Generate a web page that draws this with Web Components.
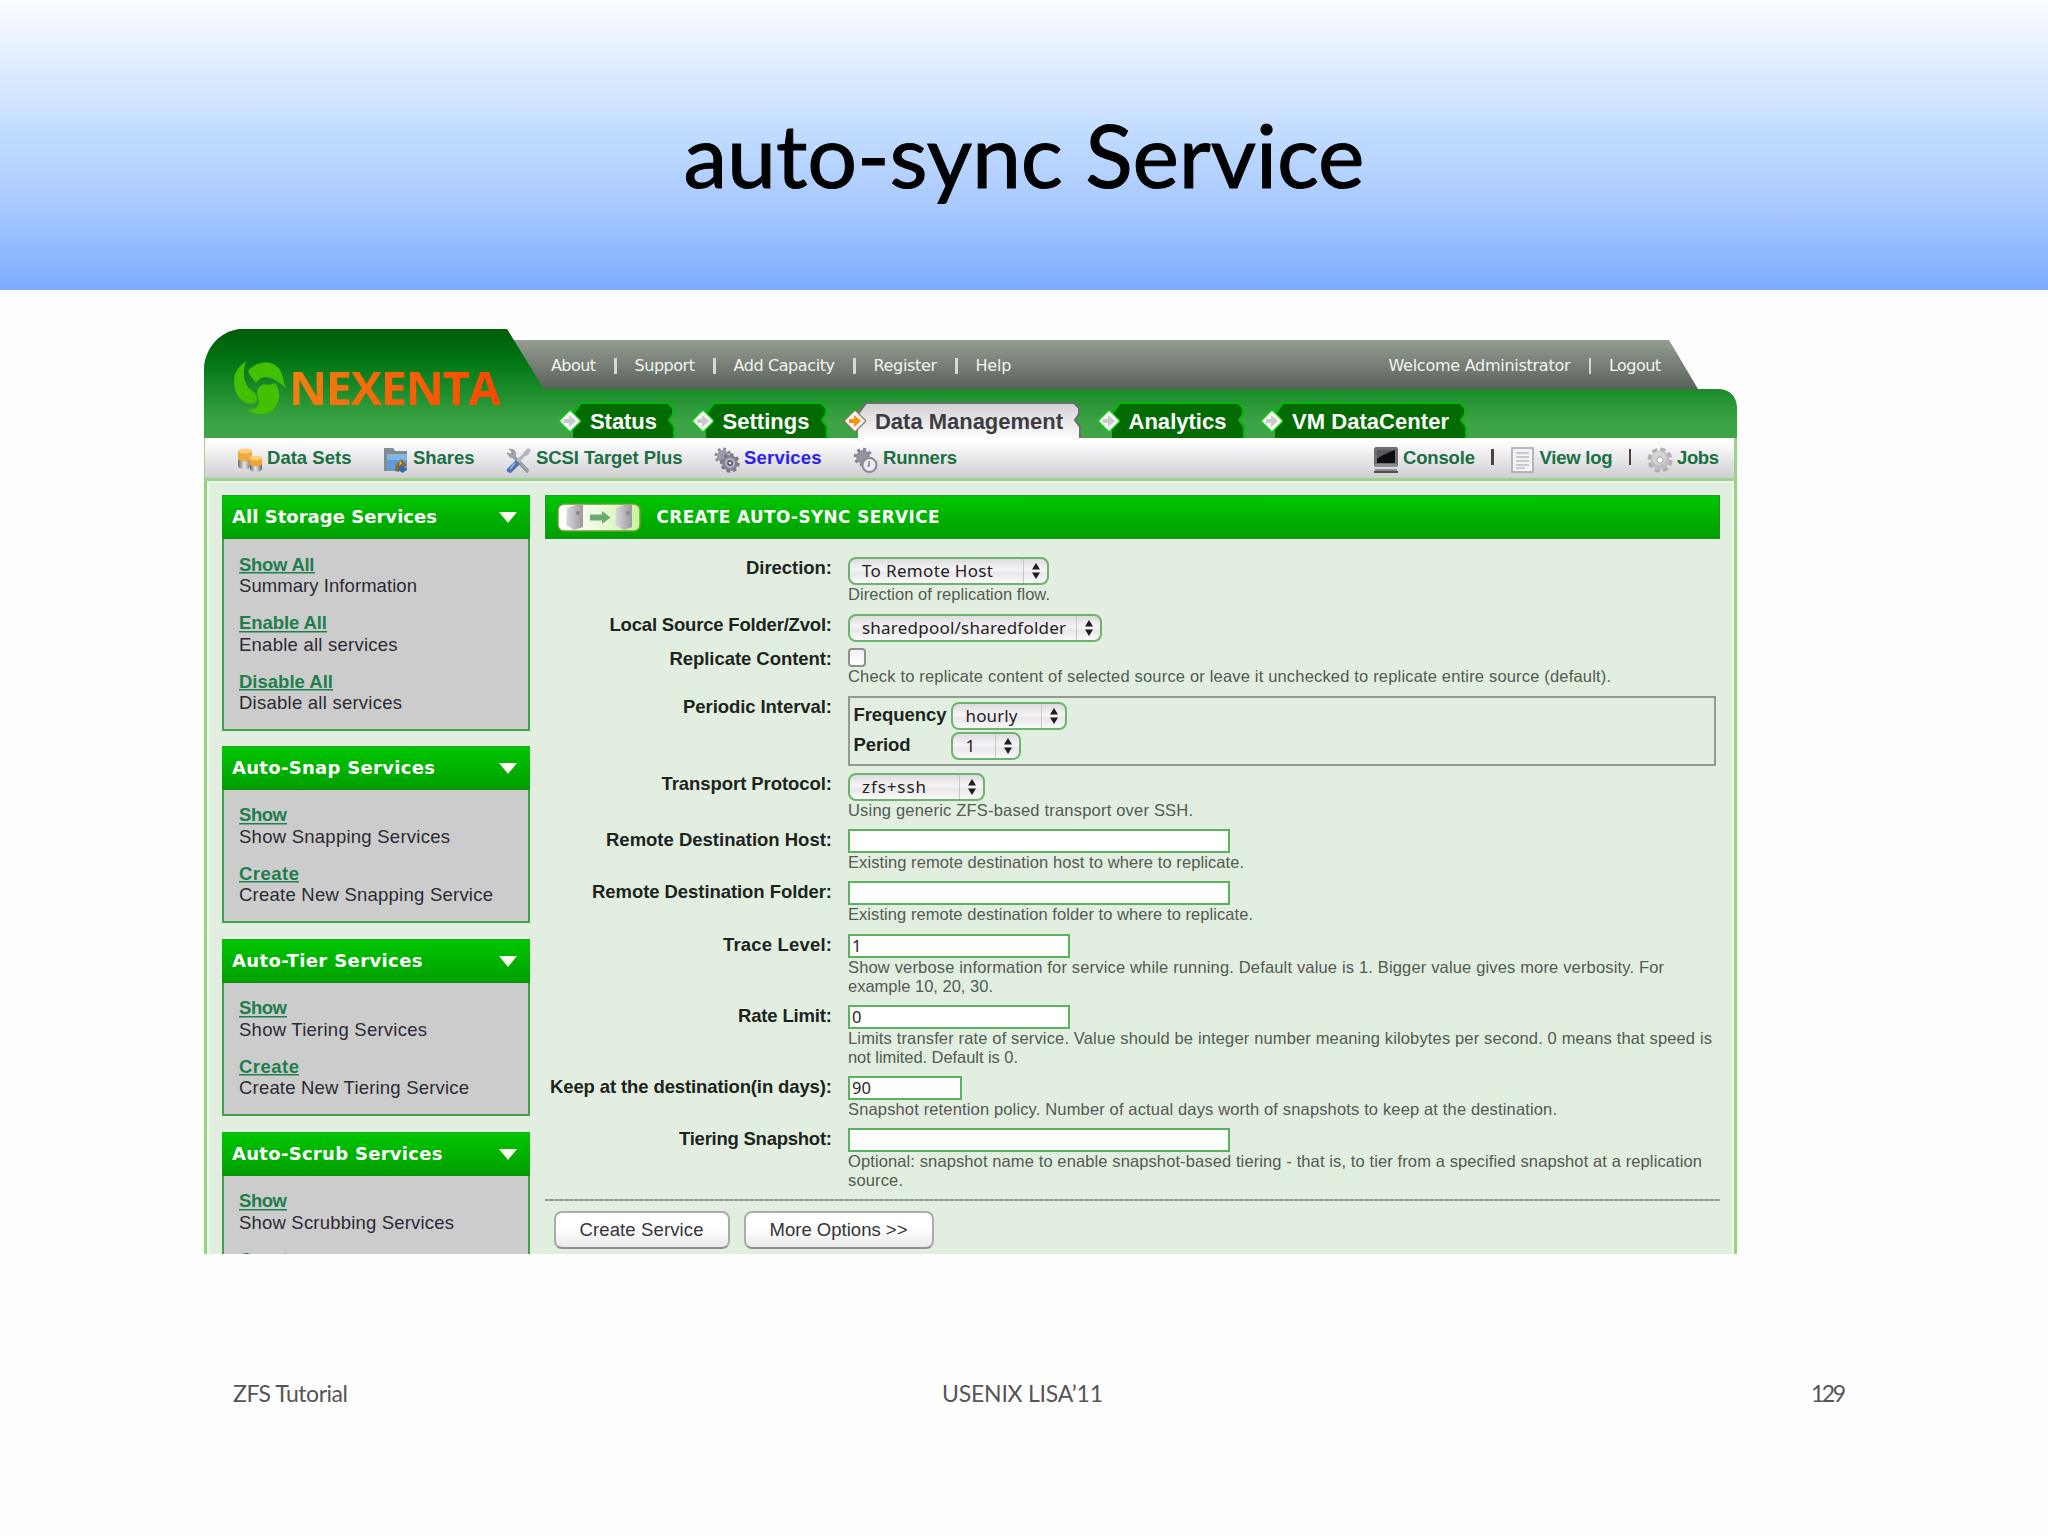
<!DOCTYPE html>
<html lang="en">
<head>
<meta charset="utf-8">
<title>auto-sync Service</title>
<style>
html, body{
   margin:0;
   width:2048px;
   height:1536px;
   background:#fefefe;
   overflow:hidden;
}
</style>
</head>
<body>
<slide-page>
   <fit-text slot="title" w="681">auto-sync Service</fit-text>

   <nex-console>
      <nex-sidebar slot="side">
         <side-box name="All Storage Services" w="205" h="235.5">
            <side-link name="Show All" w="75.5" tw="178">Summary Information</side-link>
            <side-link name="Enable All" w="88" tw="158.5">Enable all services</side-link>
            <side-link name="Disable All" w="94" tw="163">Disable all services</side-link>
         </side-box>
         <side-box name="Auto-Snap Services" w="203" h="177.7">
            <side-link name="Show" w="48" tw="211">Show Snapping Services</side-link>
            <side-link name="Create" w="60" tw="254">Create New Snapping Service</side-link>
         </side-box>
         <side-box name="Auto-Tier Services" w="190.5" h="177.7">
            <side-link name="Show" w="48" tw="188">Show Tiering Services</side-link>
            <side-link name="Create" w="60" tw="230">Create New Tiering Service</side-link>
         </side-box>
         <side-box name="Auto-Scrub Services" w="210.5" h="177.7">
            <side-link name="Show" w="48" tw="215">Show Scrubbing Services</side-link>
            <side-link name="Create" w="60"></side-link>
         </side-box>
      </nex-sidebar>

      <sync-form slot="main"></sync-form>
   </nex-console>

   <fit-text slot="left" w="115">ZFS Tutorial</fit-text>
   <fit-text slot="center" w="161">USENIX LISA’11</fit-text>
   <fit-text slot="right" w="35">129</fit-text>
</slide-page>

<script>
const ICONS = {
   data: `
      <defs><linearGradient id="c" x2="1"><stop offset="0" stop-color="#6d6a68"/><stop offset=".45" stop-color="#e9e7e5"/><stop offset="1" stop-color="#6e6a66"/></linearGradient></defs>
      <path d="M1 4v15c0 4 14 4 14 0V4z" fill="url(#c)"/>
      <path d="M1 4v8c0 3 14 3 14 0V4z" fill="#f0a840"/><ellipse cx="8" cy="4" rx="7" ry="2.6" fill="#fbcd78"/>
      <path d="M13 11v11c0 3.5 12 3.5 12 0V11z" fill="url(#c)"/>
      <path d="M13 11v6c0 3 12 3 12 0v-6z" fill="#eda436"/><ellipse cx="19" cy="11" rx="6" ry="2.3" fill="#fbd07e"/>`,
   share: `
      <path d="M1 1h9l2 3h12v20H1z" fill="#828a94"/><path d="M4 7h20v17H4z" fill="#609bd6"/><path d="M4 7h20v6H4z" fill="#84b4e2"/>
      <path d="M12 24c0-6 2-9 5-9l1-3 6 6-5 3c-2 0-3 1-3 4z" fill="#8b6a2c"/><path d="M17 14l2 2-3 3z" fill="#f3b63a"/><path d="M17 18l7 4-4 4-5-3z" fill="#2d69b0"/>`,
   tools: `
      <path d="M3 2l5 1 2 4-1 2 14 14-2 3L7 11l-3-1-3-4 4 1 1-2z" fill="#9ba0a7" stroke="#9ba0a7"/>
      <path d="M22 1l3 2-3 5-3 1-6 7-3-3 7-6 1-2z" fill="#b3b6bc"/><path d="M10 13l4 4-9 9c-3 0-5-2-4-4z" fill="#4c74b4"/><path d="M9 16l-5 6" stroke="#9db8e2" stroke-width="1.5"/>`,
   gears: `
      <circle cx="9" cy="9" r="6" fill="#9d9ba9"/><circle cx="9" cy="9" r="7" fill="none" stroke="#8b8997" stroke-width="3" stroke-dasharray="2.8 2.7"/>
      <circle cx="16" cy="16" r="8" fill="#888696"/><circle cx="16" cy="16" r="8.3" fill="none" stroke="#77758a" stroke-width="3" stroke-dasharray="3.3 3.2"/>
      <circle cx="16" cy="16" r="5" fill="#b6b4c0"/><circle cx="16" cy="16" r="3" fill="#5f5e6c"/><circle cx="16" cy="16" r="1.3" fill="#e2e2e8"/>`,
   runner: `
      <circle cx="10" cy="10" r="7" fill="#94929f"/><circle cx="10" cy="10" r="7.8" fill="none" stroke="#85839a" stroke-width="3" stroke-dasharray="3 3.1"/>
      <circle cx="16.5" cy="18" r="7" fill="#ececf1" stroke="#8b8a95" stroke-width="2"/><path d="M16 14v5M16.5 19h-2" stroke="#777" stroke-width="1.4" fill="none"/>`,
   console: `
      <rect x="1" y="0" width="24" height="20" rx="2" fill="#6d6f74"/><rect x="4" y="3" width="18" height="13" fill="#0c0c0e"/><path d="M4 3h18L10 8L4 12z" fill="#55575b"/>
      <path d="M2 17h22v8H2z" fill="#8c8e92"/><path d="M2 20h22v2H2z" fill="#d9dadc"/><path d="M1 24h24v2H1z" fill="#4d4f53"/>`,
   log: `
      <rect x="2" y="1" width="21" height="24" fill="#f3f3f4" stroke="#a9a9ad" stroke-width="1.6"/><path d="M6 6h13M6 10h13M6 14h13M6 18h13M6 21h9" stroke="#bcbcc0" stroke-width="1.3"/>`,
   jobs: `
      <circle cx="13" cy="13" r="10" fill="none" stroke="#b0b0b3" stroke-width="5" stroke-dasharray="5 2.85"/><circle cx="13" cy="13" r="9.5" fill="#bfbfc1"/>
      <circle cx="12" cy="11" r="7" fill="#d4d4d6"/><circle cx="13" cy="13" r="3.2" fill="#f5f5f6" stroke="#a6a6a9"/>`
}

window.customElements.define('slide-page',
   class SlidePage extends HTMLElement {
      constructor(){super(); this.attachShadow({mode:'open'});
	 this.shadowRoot.innerHTML = `
<style>
:host{
   display:flex;
   flex-direction:column;
   width:2048px;
   height:1536px;
   font-family:Lato, sans-serif;
}
header{
   height:290px;
   box-sizing:border-box;
   padding-top:103px;
   text-align:center;
   font-size:88px;
   line-height:102px;
   color:#000;
   -webkit-text-stroke:1px #000;
   background:linear-gradient(#fbfdff 0, #d9e8ff 28%, #c0dbff 47%, #aacaff 70%, #7cacff 100%);
}
main{ margin:39px 0 0 204px; }
footer{
   display:grid;
   grid-template-columns:709px auto 1fr;
   margin:125px 202px 0 233px;
   font-size:23px;
   line-height:28px;
   color:#555458;
}
.r{ text-align:right; }
</style>
<header><slot name="title"></slot></header>
<main><slot></slot></main>
<footer>
   <div><slot name="left"></slot></div>
   <div><slot name="center"></slot></div>
   <div class="r"><slot name="right"></slot></div>
</footer>
   `;
      }
})

window.customElements.define('page-icon',
   class PageIcon extends HTMLElement {
      constructor(){super(); this.attachShadow({mode:'open'});
	 this.shadowRoot.innerHTML = `
<style>
:host{ display:block; width:26px; height:26px; flex:none; }
svg{ display:block; }
</style>
<svg width="26" height="26" viewBox="0 0 26 26">${ICONS[this.getAttribute("name")]}</svg>
   `;
      }
})

window.customElements.define('nav-tab',
   class NavTab extends HTMLElement {
      constructor(){super(); this.attachShadow({mode:'open'});
	 const w = +this.getAttribute("w");
	 const on = this.hasAttribute("active");
	 const r = w + 48;
	 const fill = on ? "url(#g)" : "#026b02";
	 const line = on ? "#66706a" : "#05b70a";

	 this.shadowRoot.innerHTML = `
<style>
:host{
   display:grid;
   width:${r}px;
   height:36px;
   color:${on ? "#3c3c42" : "#fff"};
   font:bold 22px/26px "Liberation Sans", sans-serif;
}
svg, div{ grid-area:1/1; }
svg{ overflow:visible; }
div{ padding:7px 0 0 30px; }
</style>
<svg width="${r}" height="36">
   <defs><linearGradient id="g" x2="0" y2="1"><stop offset="0" stop-color="#d3cfd1"/><stop offset="1" stop-color="#fdfdfe"/></linearGradient></defs>
   <path d="M13 36V10L21 1H${r-7}L${r-2} 6V12L${r-6} 18L${r-1} 25V36z" fill="${fill}"/>
   <path d="M13 12L21 1H${r-7}L${r-2} 6V12L${r-6} 18L${r-1} 25V36" fill="none" stroke="${line}" stroke-width="2"/>
   <path d="M10 10L19 19L10 28L1 19z" fill="#f4f4f3" stroke="${on ? "#8b7c66" : "#16d01c"}" stroke-width="4" stroke-linejoin="round"/>
   <path d="M10 10L19 19L10 28L1 19z" fill="#f6f6f5" stroke="#f6f6f5" stroke-width="1.5" stroke-linejoin="round"/>
   <path d="M4 17h5v-4l7 6-7 6v-4H4z" fill="${on ? "#fb8f12" : "#c9c9c9"}"/>
</svg>
<div><fit-text w="${w}"><slot></slot></fit-text></div>
   `;
      }
})

window.customElements.define('menu-item',
   class MenuItem extends HTMLElement {
      constructor(){super(); this.attachShadow({mode:'open'});
	 this.shadowRoot.innerHTML = `
<style>
:host{
   display:flex;
   gap:4px;
   color:${this.hasAttribute("active") ? "#2b20f4" : "#1b6f42"};
   font:bold 18.5px/22px "Liberation Sans", sans-serif;
}
page-icon{ margin-top:1px; }
fit-text{ margin-top:1px; }
</style>
<page-icon name="${this.getAttribute("icon")}"></page-icon>
<fit-text w="${this.getAttribute("w")}"><slot></slot></fit-text>
   `;
      }
})

window.customElements.define('nex-console',
   class NexConsole extends HTMLElement {
      constructor(){super(); this.attachShadow({mode:'open'});
	 this.shadowRoot.innerHTML = `
<style>
:host{
   display:flex;
   flex-direction:column;
   width:1533px;
   height:924.5px;
   overflow:hidden;
}
.head{
   display:grid;
   grid-template-columns:339px 1fr;
   height:109px;
   flex:none;
}
.bg{ grid-area:1/1/2/3; display:block; }
.logo{
   grid-area:1/1;
   display:flex;
   padding:31px 0 0 28px;
   gap:1px;
}
.brand{
   font:bold 47px/56px "Open Sans", sans-serif;
   background:linear-gradient(90deg, #f08012, #fb4703);
   -webkit-background-clip:text;
   background-clip:text;
   color:transparent;
   height:56px;
   margin-top:-1px;
}
.right{ grid-area:1/2; }
.top{
   display:flex;
   justify-content:space-between;
   height:60px;
   box-sizing:border-box;
   padding:26px 76px 0 8px;
   font:16px/22px "DejaVu Sans", sans-serif;
   color:#f2f4f0;
}
.top div, .tools, .menu{ display:flex; }
.top div{ gap:18px; }
i{
   width:2.5px;
   height:16px;
   margin-top:3px;
   background:#d5d9d3;
}
.tabs{
   display:flex;
   gap:17.5px;
   padding:13px 0 0 17px;
}
.sub{
   display:flex;
   justify-content:space-between;
   height:43px;
   flex:none;
   box-sizing:border-box;
   padding:8px 15px 0 32px;
   border:solid #9ad389;
   border-width:0 3px 3px 1px;
   background:linear-gradient(#fff 8%, #e9e9ec 50%, #cfcfd2 100%);
}
.menu{ gap:31.5px; }
.tools{ gap:16px; }
.tools i{ background:#4b4046; }
.body{
   display:flex;
   gap:14.5px;
   flex:1;
   min-height:0;
   padding:14px 12px 0 15px;
   border:solid #96d184;
   border-width:0 3px;
   background:#e2eee0;
   box-shadow:inset 2px 0 #eefae9, inset -2px 0 #eefae9, inset 0 2px #edf5eb;
}
</style>
<div class="head">
   <svg class="bg" width="1533" height="109">
      <defs>
         <linearGradient id="dk" gradientUnits="userSpaceOnUse" x1="0" y1="0" x2="0" y2="109"><stop offset="0" stop-color="#015c08"/><stop offset=".3" stop-color="#027614"/><stop offset=".6" stop-color="#1f8f2e"/><stop offset=".85" stop-color="#3ca444"/><stop offset="1" stop-color="#3ea445"/></linearGradient>
         <linearGradient id="gr" x2="0" y2="1"><stop offset="0" stop-color="#959d92"/><stop offset="1" stop-color="#5a615a"/></linearGradient>
      </defs>
      <path d="M290 11H1465L1494 60H290z" fill="url(#gr)"/>
      <path d="M0 109V38C2 18 16 2 36 0H303L340 60H1514C1525 60 1533 67 1533 79V109z" fill="url(#dk)"/>
   </svg>
   <div class="logo">
      <svg width="56" height="54" viewBox="41 51 56 54" fill="#43c002">
         <path d="M55 53C45 58 41 68 44 80C47 91 56 97 64 94C67 91 66 87 63 83C54 79 50 66 55 53z"/>
         <path d="M57 62C66 51 83 51 89 61C92 66 92 72 95 79C88 73 80 67 73 68C68 69 67 72 65 74C62 70 58 66 57 62z"/>
         <path d="M73 75C77 77 82 75 84 74C91 83 89 97 79 103C71 107 62 105 57 101C67 101 69 95 67 88C65 82 67 77 73 75z"/>
      </svg>
      <fit-text class="brand" w="212">NEXENTA</fit-text>
   </div>
   <div class="right">
      <div class="top">
         <div>
            <fit-text w="45">About</fit-text><i></i>
            <fit-text w="60.5">Support</fit-text><i></i>
            <fit-text w="101.5">Add Capacity</fit-text><i></i>
            <fit-text w="63.5">Register</fit-text><i></i>
            <fit-text w="36">Help</fit-text>
         </div>
         <div>
            <fit-text w="182">Welcome Administrator</fit-text><i></i>
            <fit-text w="52">Logout</fit-text>
         </div>
      </div>
      <div class="tabs">
         <nav-tab w="67">Status</nav-tab>
         <nav-tab w="87">Settings</nav-tab>
         <nav-tab w="188" active>Data Management</nav-tab>
         <nav-tab w="98">Analytics</nav-tab>
         <nav-tab w="157">VM DataCenter</nav-tab>
      </div>
   </div>
</div>
<div class="sub">
   <div class="menu">
      <menu-item icon="data" w="84.5">Data Sets</menu-item>
      <menu-item icon="share" w="61.5">Shares</menu-item>
      <menu-item icon="tools" w="146.5">SCSI Target Plus</menu-item>
      <menu-item icon="gears" w="77.5" active>Services</menu-item>
      <menu-item icon="runner" w="74">Runners</menu-item>
   </div>
   <div class="tools">
      <menu-item icon="console" w="72">Console</menu-item><i></i>
      <menu-item icon="log" w="73">View log</menu-item><i></i>
      <menu-item icon="jobs" w="42">Jobs</menu-item>
   </div>
</div>
<div class="body">
   <slot name="side"></slot>
   <slot name="main"></slot>
</div>
   `;
      }
})

window.customElements.define('nex-sidebar',
   class NexSidebar extends HTMLElement {
      constructor(){super(); this.attachShadow({mode:'open'});
	 this.shadowRoot.innerHTML = `
<style>
:host{
   display:flex;
   flex-direction:column;
   gap:15.3px;
   width:308px;
   flex:none;
}
</style>
<slot></slot>
   `;
      }
})

window.customElements.define('side-box',
   class SideBox extends HTMLElement {
      constructor(){super(); this.attachShadow({mode:'open'});
	 this.shadowRoot.innerHTML = `
<style>
:host{
   display:block;
   flex:none;
   box-sizing:border-box;
   height:${this.getAttribute("h")}px;
   border:2px solid #43a047;
   border-top:none;
   background:#cdcccd;
}
.title{
   display:flex;
   justify-content:space-between;
   height:44px;
   box-sizing:border-box;
   margin:0 -2px;
   padding:10px 13px 0 10px;
   border-top:1px solid #22a032;
   border-bottom:1px solid #108a1c;
   background:linear-gradient(#00c600, #009f00);
   color:#fff;
   font:bold 18px/22px "DejaVu Sans", sans-serif;
}
svg{ margin-top:6px; }
.links{
   display:flex;
   flex-direction:column;
   gap:15.5px;
   padding:14.5px 15px 0;
}
</style>
<div class="title">
   <fit-text w="${this.getAttribute("w")}">${this.getAttribute("name")}</fit-text>
   <svg width="18" height="12"><path d="M0 0H18L9 11z" fill="#fbfff0"/></svg>
</div>
<div class="links"><slot></slot></div>
   `;
      }
})

window.customElements.define('side-link',
   class SideLink extends HTMLElement {
      constructor(){super(); this.attachShadow({mode:'open'});
	 const get = name => this.getAttribute(name);
	 this.shadowRoot.innerHTML = `
<style>
:host{
   display:flex;
   flex-direction:column;
   font:18.5px/21.5px "Liberation Sans", sans-serif;
   color:#2c2a33;
}
.name{
   font-weight:bold;
   color:#1f7e4b;
   background:linear-gradient(#1f7e4b, #1f7e4b) 0 18.5px/100% 1.5px no-repeat;
}
</style>
<fit-text class="name" w="${get("w")}">${get("name")}</fit-text>
${get("tw") ? `<fit-text w="${get("tw")}"><slot></slot></fit-text>` : ""}
   `;
      }
})

window.customElements.define('mac-select',
   class MacSelect extends HTMLElement {
      constructor(){super(); this.attachShadow({mode:'open'});
	 this.shadowRoot.innerHTML = `
<style>
:host{
   display:flex;
   box-sizing:border-box;
   width:${this.getAttribute("w")}px;
   height:28px;
   border:2px solid #6db36f;
   border-radius:8px;
   background:linear-gradient(#dedcde, #f6f4f6 45%, #e9e7e9 60%, #fbfbfb);
   font:17px/24px "Noto Sans", sans-serif;
   color:#222;
}
.value{ flex:1; padding-left:${this.getAttribute("pad") || 12}px; }
.arrows{
   width:23px;
   border-left:1px solid #c9c7c9;
}
svg{ display:block; margin:4px 0 0 8px; }
</style>
<div class="value"><fit-text w="${this.getAttribute("tw")}"><slot></slot></fit-text></div>
<div class="arrows"><svg width="8" height="16"><path d="M4 0L8 6.5H0zM4 16L0 9.5H8z" fill="#1c1c1c"/></svg></div>
   `;
      }
})

window.customElements.define('text-box',
   class TextBox extends HTMLElement {
      constructor(){super(); this.attachShadow({mode:'open'});
	 this.shadowRoot.innerHTML = `
<style>
:host{
   display:block;
   box-sizing:border-box;
   width:${this.getAttribute("w")}px;
   height:24px;
   padding-left:2px;
   border:2px solid #5cb160;
   background:#fefffe;
   font:16.5px/20px "Noto Sans", sans-serif;
   color:#2b2226;
}
</style>
<slot></slot>
   `;
      }
})

window.customElements.define('form-row',
   class FormRow extends HTMLElement {
      constructor(){super(); this.attachShadow({mode:'open'});
	 const get = name => this.getAttribute(name);
	 this.shadowRoot.innerHTML = `
<style>
:host{
   display:grid;
   grid-template-columns:287.5px 1fr;
   column-gap:16px;
   align-content:start;
   height:${get("h")}px;
   font-family:"Liberation Sans", sans-serif;
}
.label{
   text-align:right;
   font-weight:bold;
   font-size:18.5px;
   line-height:22px;
   color:#1d241d;
}
.help{
   display:flex;
   flex-direction:column;
   font-size:16.5px;
   line-height:18.5px;
   color:#525a52;
}
</style>
<div class="label"><fit-text w="${get("w")}">${get("label")}</fit-text></div>
<div>
   <slot></slot>
   <div class="help"><slot name="help"></slot></div>
</div>
   `;
      }
})

window.customElements.define('push-button',
   class PushButton extends HTMLElement {
      constructor(){super(); this.attachShadow({mode:'open'});
	 this.shadowRoot.innerHTML = `
<style>
:host{
   display:block;
   box-sizing:border-box;
   width:${this.getAttribute("w")}px;
   height:38px;
   padding-top:5px;
   border:2px solid #a9aca8;
   border-bottom-color:#8e918e;
   border-radius:8px;
   background:linear-gradient(#fff 45%, #e9e9ea);
   text-align:center;
   font:18.5px/24px "Liberation Sans", sans-serif;
   color:#333338;
}
</style>
<fit-text w="${this.getAttribute("tw")}"><slot></slot></fit-text>
   `;
      }
})

window.customElements.define('sync-form',
   class SyncForm extends HTMLElement {
      constructor(){super(); this.attachShadow({mode:'open'});
	 this.shadowRoot.innerHTML = `
<style>
:host{
   display:block;
   width:1175.5px;
   flex:none;
}
.bar{
   display:flex;
   gap:16px;
   height:44px;
   box-sizing:border-box;
   padding:7px 11px 0;
   border:1px solid #1c8f28;
   border-top-color:#22a032;
   background:linear-gradient(#00c600, #009f00);
   color:#fff;
   font:bold 16.8px/22px "DejaVu Sans", sans-serif;
}
.bar fit-text{ margin-top:3px; }
.rows{ padding-top:18px; }
.check{
   width:18px;
   height:19px;
   box-sizing:border-box;
   border:2px solid #8c918c;
   border-radius:4px;
   background:linear-gradient(#f1f1f1, #fff);
}
.period{
   display:grid;
   grid-template-columns:97px auto;
   grid-auto-rows:30px;
   justify-content:start;
   box-sizing:border-box;
   width:868px;
   height:70px;
   padding:4px 0 0 3.5px;
   border:2px solid #929a91;
   font:bold 18.5px/26px "Liberation Sans", sans-serif;
   color:#1d241d;
}
.line{
   height:2px;
   background:repeating-linear-gradient(90deg, #8c968c 0 3px, #aab4a9 3px 5px);
}
.buttons{
   display:flex;
   gap:14px;
   padding:10px 0 0 9px;
}
</style>
<div class="bar">
   <svg width="84" height="29">
      <defs>
         <linearGradient id="p" x2="1"><stop offset="0" stop-color="#fff"/><stop offset=".5" stop-color="#eef9df"/><stop offset="1" stop-color="#c5f59a"/></linearGradient>
         <linearGradient id="d" x2="1"><stop offset="0" stop-color="#dcdadc"/><stop offset="1" stop-color="#9c9a9e"/></linearGradient>
      </defs>
      <rect x="1" y="1" width="82" height="27" rx="6" fill="url(#p)" stroke="#6e9a3c" stroke-width="1.5"/>
      <path d="M10 5L18 2H26V24L17 27L9 22z" fill="url(#d)"/><circle cx="21" cy="10" r="2" fill="#89868c"/>
      <path d="M59 5L67 2H75V24L67 27L58 22z" fill="url(#d)"/><circle cx="71" cy="10" r="2" fill="#89868c"/>
      <path d="M33 11.5H45V8L53.500 14.500L45 21V17.500H33z" fill="#6bab70"/>
   </svg>
   <fit-text w="283">CREATE AUTO-SYNC SERVICE</fit-text>
</div>
<div class="rows">
   <form-row label="Direction:" w="86" h="57">
      <mac-select w="201" tw="131">To Remote Host</mac-select>
      <fit-text slot="help" w="202">Direction of replication flow.</fit-text>
   </form-row>
   <form-row label="Local Source Folder/Zvol:" w="222.5" h="34">
      <mac-select w="254" tw="204">sharedpool/sharedfolder</mac-select>
   </form-row>
   <form-row label="Replicate Content:" w="162.5" h="48">
      <div class="check"></div>
      <fit-text slot="help" w="763">Check to replicate content of selected source or leave it unchecked to replicate entire source (default).</fit-text>
   </form-row>
   <form-row label="Periodic Interval:" w="149" h="76.5">
      <div class="period">
         <fit-text w="93">Frequency</fit-text><mac-select w="116" tw="52" pad="13">hourly</mac-select>
         <fit-text w="57">Period</fit-text><mac-select w="70" tw="9" pad="13">1</mac-select>
      </div>
   </form-row>
   <form-row label="Transport Protocol:" w="170.5" h="56.5">
      <mac-select w="137" tw="64">zfs+ssh</mac-select>
      <fit-text slot="help" w="345">Using generic ZFS-based transport over SSH.</fit-text>
   </form-row>
   <form-row label="Remote Destination Host:" w="226" h="52">
      <text-box w="382"></text-box>
      <fit-text slot="help" w="396">Existing remote destination host to where to replicate.</fit-text>
   </form-row>
   <form-row label="Remote Destination Folder:" w="240" h="53">
      <text-box w="382"></text-box>
      <fit-text slot="help" w="405">Existing remote destination folder to where to replicate.</fit-text>
   </form-row>
   <form-row label="Trace Level:" w="109" h="71">
      <text-box w="222">1</text-box>
      <fit-text slot="help" w="816">Show verbose information for service while running. Default value is 1. Bigger value gives more verbosity. For</fit-text>
      <fit-text slot="help" w="145">example 10, 20, 30.</fit-text>
   </form-row>
   <form-row label="Rate Limit:" w="94" h="71">
      <text-box w="222">0</text-box>
      <fit-text slot="help" w="864">Limits transfer rate of service. Value should be integer number meaning kilobytes per second. 0 means that speed is</fit-text>
      <fit-text slot="help" w="170">not limited. Default is 0.</fit-text>
   </form-row>
   <form-row label="Keep at the destination(in days):" w="282" h="52">
      <text-box w="114">90</text-box>
      <fit-text slot="help" w="709">Snapshot retention policy. Number of actual days worth of snapshots to keep at the destination.</fit-text>
   </form-row>
   <form-row label="Tiering Snapshot:" w="153" h="71">
      <text-box w="382"></text-box>
      <fit-text slot="help" w="854">Optional: snapshot name to enable snapshot-based tiering - that is, to tier from a specified snapshot at a replication</fit-text>
      <fit-text slot="help" w="55">source.</fit-text>
   </form-row>
</div>
<div class="line"></div>
<div class="buttons">
   <push-button w="176" tw="124">Create Service</push-button>
   <push-button w="190" tw="138">More Options &gt;&gt;</push-button>
</div>
   `;
      }
})

// text tracked so that it fills the width in its "w" attribute
// defined last: it measures with the styles of all the others in place
window.customElements.define('fit-text',
   class FitText extends HTMLElement {
      constructor(){super(); this.attachShadow({mode:'open'});
	 this.shadowRoot.innerHTML = `
<style>
:host{
   display:inline-block;
   flex:none;
   white-space:nowrap;
   text-align:left;
   width:${this.getAttribute("w")}px;
}
</style>
<span><slot></slot></span>
   `;
      }

      connectedCallback(){
	 const slot = this.shadowRoot.querySelector("slot")
	 const span = this.shadowRoot.querySelector("span")
	 const text = slot.assignedNodes({flatten:true}).map(n => n.textContent).join("").trim()
	 const real = span.getBoundingClientRect().width
	 if(text.length > 1){
	    span.style.letterSpacing = (this.getAttribute("w") - real) / (text.length - 1) + "px"
	 }
      }
})
</script>
</body>
</html>
